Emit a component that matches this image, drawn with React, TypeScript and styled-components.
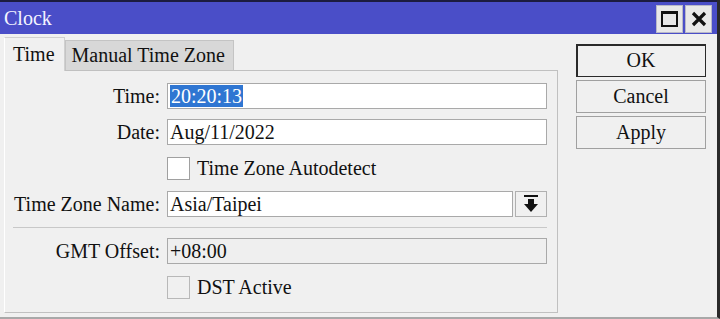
import React, { useState } from 'react';
import styled, { createGlobalStyle } from 'styled-components';

const GlobalStyle = createGlobalStyle`
	html, body {
		margin: 0;
		padding: 0;
		background: #f0f0f0;
	}
	* {
		box-sizing: border-box;
	}
`;

export default function App() {
	const [tab, setTab] = useState<'time' | 'manual'>('time');
	const [autodetect, setAutodetect] = useState<boolean>(false);

	return (
		<Window>
			<GlobalStyle />
			<TitleBar>
				<Title>Clock</Title>
				<TitleButtons>
					<TitleButton aria-label="maximize">
						<MaxIcon />
					</TitleButton>
					<TitleButton aria-label="close">
						<svg width="16" height="16" viewBox="0 0 16 16">
							<path d="M2 2 L14 14 M14 2 L2 14" stroke="#111" strokeWidth="3.2" strokeLinecap="butt" />
						</svg>
					</TitleButton>
				</TitleButtons>
			</TitleBar>
			<Body>
				<Main>
					<TabRow>
						<Tab active={tab === 'time'} onClick={() => setTab('time')}>
							Time
						</Tab>
						<Tab active={tab === 'manual'} onClick={() => setTab('manual')}>
							Manual Time Zone
						</Tab>
					</TabRow>
					<Panel>
						<Form>
							<Label>Time:</Label>
							<TextField>
								<Selected>20:20:13</Selected>
							</TextField>
							<Label>Date:</Label>
							<TextField>Aug/11/2022</TextField>
							<span />
							<CheckRow onClick={() => setAutodetect(!autodetect)}>
								<CheckBox>{autodetect ? '✓' : ''}</CheckBox>
								Time Zone Autodetect
							</CheckRow>
							<Label>Time Zone Name:</Label>
							<SelectRow>
								<TextField>Asia/Taipei</TextField>
								<DropButton aria-label="open list">
									<svg width="16" height="18" viewBox="0 0 16 18">
										<rect x="1" y="0" width="14" height="2" fill="#111" />
										<rect x="5" y="4" width="6" height="6" fill="#111" />
										<path d="M1 9 L15 9 L8 17 Z" fill="#111" />
									</svg>
								</DropButton>
							</SelectRow>
							<Separator />
							<Label>GMT Offset:</Label>
							<TextField disabled>+08:00</TextField>
							<span />
							<CheckRow>
								<CheckBox disabled />
								DST Active
							</CheckRow>
						</Form>
					</Panel>
				</Main>
				<Side>
					<DialogButton primary>OK</DialogButton>
					<DialogButton>Cancel</DialogButton>
					<DialogButton>Apply</DialogButton>
				</Side>
			</Body>
		</Window>
	);
}

const Window = styled.div`
	width: 720px;
	height: 319px;
	display: flex;
	flex-direction: column;
	background: #f0f0f0;
	border-right: 3px solid #2a2a2a;
	border-bottom: 2px solid #a8a8a8;
	font-family: 'Liberation Serif', 'Times New Roman', serif;
	font-size: 20px;
	color: #111;
	overflow: hidden;
`;

const TitleBar = styled.div`
	height: 34px;
	flex-shrink: 0;
	display: flex;
	align-items: center;
	justify-content: space-between;
	background: #4a4ec8;
	border-top: 2px solid #1c1c40;
	padding: 0 5px 0 4px;
`;

const Title = styled.span`
	color: #f4f4ff;
	font-size: 20px;
	line-height: 30px;
`;

const TitleButtons = styled.div`
	display: flex;
	gap: 2px;
	margin-top: 1px;
`;

const TitleButton = styled.button`
	width: 27px;
	height: 28px;
	padding: 0;
	display: flex;
	align-items: center;
	justify-content: center;
	background: #e8e8e8;
	border: 1px solid #b8b8c8;
	cursor: pointer;
`;

const MaxIcon = styled.span`
	display: block;
	width: 17px;
	height: 16px;
	border: 2px solid #111;
	border-top-width: 3px;
`;

const Body = styled.div`
	flex: 1;
	display: flex;
	gap: 18px;
	padding: 2px 0 4px 4px;
`;

const Main = styled.div`
	width: 554px;
	display: flex;
	flex-direction: column;
`;

const TabRow = styled.div`
	display: flex;
	align-items: flex-end;
	height: 34px;
`;

const Tab = styled.div<{ active?: boolean }>`
	height: ${(p) => (p.active ? '34px' : '30px')};
	padding: ${(p) => (p.active ? '0 9px 0 8px' : '0 8px 0 6px')};
	display: flex;
	align-items: center;
	background: ${(p) => (p.active ? '#f0f0f0' : '#d8d8d8')};
	border: 1px solid ${(p) => (p.active ? '#d0d0d0' : '#c4c4c4')};
	border-bottom: none;
	border-left-color: ${(p) => (p.active ? '#ffffff' : '#c4c4c4')};
	margin-bottom: ${(p) => (p.active ? '-1px' : '0')};
	position: relative;
	z-index: ${(p) => (p.active ? 1 : 0)};
	cursor: pointer;
`;

const Panel = styled.div`
	flex: 1;
	border: 1px solid #c0c0c0;
	border-left-color: #ffffff;
	background: #f0f0f0;
	padding: 12px 10px 0 0;
`;

const Form = styled.div`
	display: grid;
	grid-template-columns: 155px 1fr;
	grid-template-rows: 26px 26px 26px 26px 1px 26px 26px;
	column-gap: 7px;
	row-gap: 10px;
	align-items: center;
`;

const Label = styled.span`
	text-align: right;
	line-height: 26px;
	white-space: nowrap;
`;

const TextField = styled.div<{ disabled?: boolean }>`
	height: 26px;
	flex: 1;
	display: flex;
	align-items: center;
	padding-left: 2px;
	background: ${(p) => (p.disabled ? '#efefef' : '#ffffff')};
	border: 1px solid #a9a9a9;
	line-height: 22px;
	white-space: nowrap;
`;

const Selected = styled.span`
	background: #2f76d2;
	color: #ffffff;
	padding: 0 1px;
	line-height: 22px;
`;

const CheckRow = styled.label`
	display: flex;
	align-items: center;
	gap: 7px;
	height: 26px;
	cursor: pointer;
`;

const CheckBox = styled.span<{ disabled?: boolean }>`
	width: 23px;
	height: 23px;
	display: flex;
	align-items: center;
	justify-content: center;
	font-size: 16px;
	background: ${(p) => (p.disabled ? '#f0f0f0' : '#ffffff')};
	border: 1px solid ${(p) => (p.disabled ? '#b8b8b8' : '#a0a0a0')};
`;

const SelectRow = styled.div`
	display: flex;
	gap: 2px;
`;

const DropButton = styled.button`
	width: 32px;
	height: 26px;
	padding: 0;
	display: flex;
	align-items: center;
	justify-content: center;
	background: #f0f0f0;
	border: 1px solid #b0b0b0;
	cursor: pointer;
`;

const Separator = styled.div`
	grid-column: 1 / -1;
	height: 1px;
	background: #c8c8c8;
	margin-left: 8px;
`;

const Side = styled.div`
	width: 130px;
	display: flex;
	flex-direction: column;
	gap: 3px;
	padding-top: 8px;
`;

const DialogButton = styled.button<{ primary?: boolean }>`
	height: 33px;
	padding: 0;
	font-family: 'Liberation Serif', 'Times New Roman', serif;
	font-size: 20px;
	color: #111;
	background: #f0f0f0;
	border: 1px solid ${(p) => (p.primary ? '#2a2a2a' : '#a0a0a0')};
	box-shadow: ${(p) => (p.primary ? 'inset 1px 1px 0 #2a2a2a' : 'none')};
	cursor: pointer;
`;
